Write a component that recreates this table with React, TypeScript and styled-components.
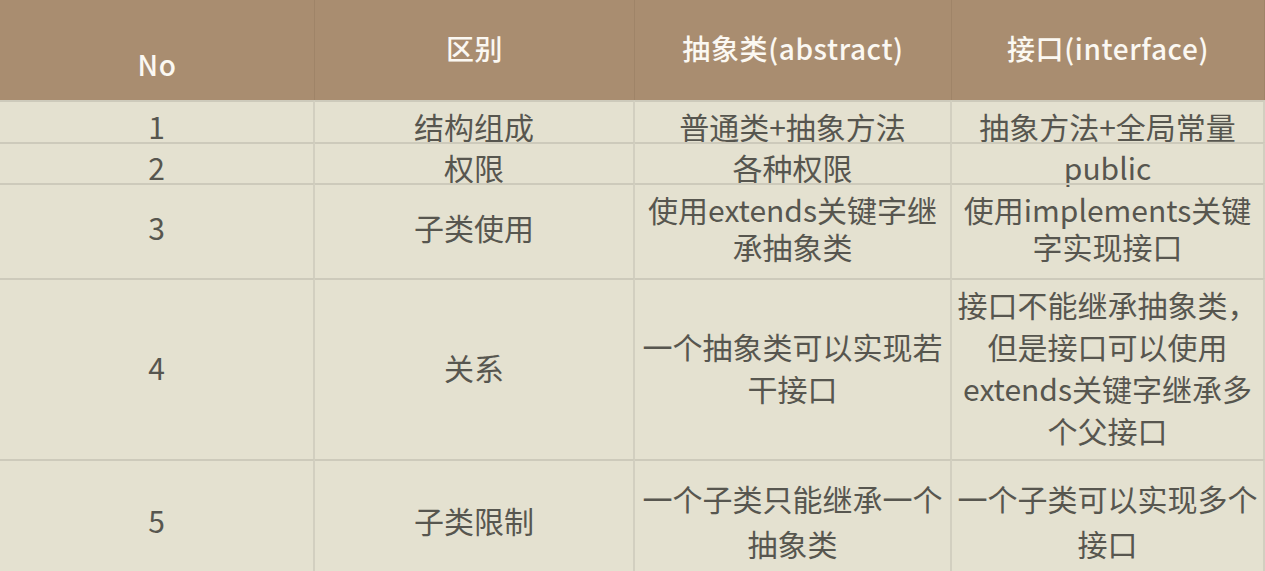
import React from 'react';
import styled, { createGlobalStyle } from 'styled-components';

const GlobalStyle = createGlobalStyle`
	html, body {
		margin: 0;
		padding: 0;
		background: #e4e1d0;
	}
	body {
		font-family: 'Noto Sans CJK SC', 'Noto Sans', sans-serif;
	}
`;

const Grid = styled.div`
	display: grid;
	grid-template-columns: 315px 320px 317px 1fr;
	grid-template-rows: 100px 42px 41px 95px 181px 115px;
	width: 1265px;
	height: 571px;
	overflow: hidden;
	background: #e4e1d0;
`;

const HeadCell = styled.div<{ low?: boolean }>`
	display: flex;
	align-items: center;
	justify-content: center;
	background: #a98d70;
	color: #fbf8f2;
	font-size: 28px;
	font-weight: 500;
	letter-spacing: 0.6px;
	padding-top: ${props => (props.low ? '27px' : '0px')};
	padding-bottom: ${props => (props.low ? '0px' : '4px')};
	border-right: 1px solid #9f8468;
	&:last-child {
		border-right: none;
	}
`;

// shift > 0 pushes the text down, shift < 0 pulls it up (by half the value)
const Cell = styled.div<{ shift: number; lineHeight: number }>`
	display: flex;
	flex-direction: column;
	align-items: center;
	justify-content: center;
	text-align: center;
	color: #57564f;
	font-size: 30px;
	line-height: ${props => props.lineHeight}px;
	white-space: nowrap;
	padding-top: ${props => Math.max(props.shift, 0)}px;
	padding-bottom: ${props => Math.max(-props.shift, 0)}px;
	border-right: 2px solid #d2cfc0;
	border-top: 2px solid #cdcabb;
	box-sizing: border-box;
`;

const Line = styled.span`
	display: block;
`;

type Row = { cells: string[][]; shift: number; lineHeight: number };

const headers = ['No', '区别', '抽象类(abstract)', '接口(interface)'];

const rows: Row[] = [
	{ cells: [['1'], ['结构组成'], ['普通类+抽象方法'], ['抽象方法+全局常量']], shift: 8, lineHeight: 40 },
	{ cells: [['2'], ['权限'], ['各种权限'], ['public']], shift: 6, lineHeight: 40 },
	{
		cells: [['3'], ['子类使用'], ['使用extends关键字继', '承抽象类'], ['使用implements关键', '字实现接口']],
		shift: -8,
		lineHeight: 37,
	},
	{
		cells: [
			['4'],
			['关系'],
			['一个抽象类可以实现若', '干接口'],
			['接口不能继承抽象类，', '但是接口可以使用', 'extends关键字继承多', '个父接口'],
		],
		shift: -6,
		lineHeight: 42,
	},
	{
		cells: [['5'], ['子类限制'], ['一个子类只能继承一个', '抽象类'], ['一个子类可以实现多个', '接口']],
		shift: 6,
		lineHeight: 45,
	},
];

const App = () => {
	return (
		<>
			<GlobalStyle />
			<Grid>
				{headers.map((h, i) => (
					<HeadCell key={h} low={i === 0}>
						{h}
					</HeadCell>
				))}
				{rows.map((row, r) =>
					row.cells.map((lines, c) => (
						<Cell key={`${r}-${c}`} shift={row.shift} lineHeight={row.lineHeight}>
							{lines.map(l => (
								<Line key={l}>{l}</Line>
							))}
						</Cell>
					))
				)}
			</Grid>
		</>
	);
};

export default App;
